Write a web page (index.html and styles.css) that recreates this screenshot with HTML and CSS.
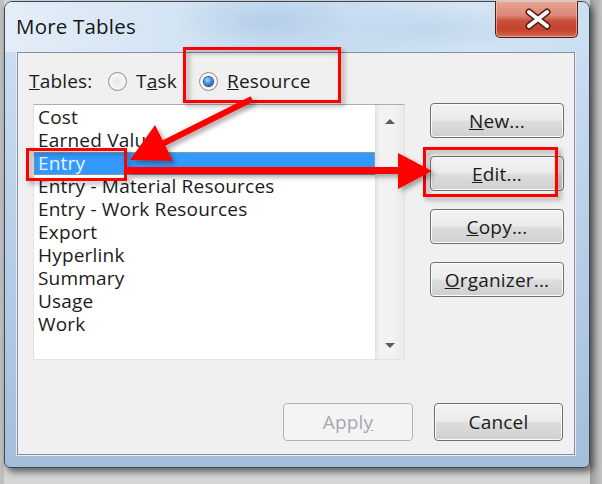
FILE: index.html
```html
<!DOCTYPE html>
<html>
<head>
<meta charset="utf-8">
<title>More Tables</title>
<link rel="stylesheet" href="styles.css">
</head>
<body>
<div class="screen">
  <div class="window">
    <div class="titlebar">
      <span class="title">More Tables</span>
      <div class="close-btn">
        <svg width="83" height="37" viewBox="0 0 83 37">
          <path d="M33 11 L51 25 M51 11 L33 25" stroke="#5a1c14" stroke-width="7" stroke-linecap="round" fill="none"/>
          <path d="M33 11 L51 25 M51 11 L33 25" stroke="#ffffff" stroke-width="4" stroke-linecap="round" fill="none"/>
        </svg>
      </div>
    </div>
    <div class="client">
      <div class="tables-row">
        <span class="label"><u>T</u>ables:</span>
        <span class="radio radio-task"><span class="radio-circle"></span><span class="radio-text">T<u>a</u>sk</span></span>
        <span class="radio"><span class="radio-circle checked"></span><span class="radio-text"><u>R</u>esource</span></span>
      </div>
      <div class="main-row">
        <div class="listbox">
          <ul class="items">
            <li>Cost</li>
            <li>Earned Value</li>
            <li class="selected">Entry</li>
            <li>Entry - Material Resources</li>
            <li>Entry - Work Resources</li>
            <li>Export</li>
            <li>Hyperlink</li>
            <li>Summary</li>
            <li>Usage</li>
            <li>Work</li>
          </ul>
          <div class="scrollbar">
            <span class="arrow-up"></span>
            <span class="arrow-down"></span>
          </div>
        </div>
        <div class="side-buttons">
          <button class="btn side"><u>N</u>ew...</button>
          <button class="btn side"><u>E</u>dit...</button>
          <button class="btn side"><u>C</u>opy...</button>
          <button class="btn side"><u>O</u>rganizer...</button>
        </div>
      </div>
      <div class="footer">
        <button class="btn foot apply" disabled>Appl<u>y</u></button>
        <button class="btn foot cancel">Cancel</button>
      </div>
    </div>
  </div>
  <svg class="annotations" width="602" height="484" viewBox="0 0 602 484">
    <defs>
      <filter id="sh" x="-20%" y="-20%" width="140%" height="140%">
        <feDropShadow dx="3" dy="3" stdDeviation="2.5" flood-color="#000" flood-opacity="0.35"/>
      </filter>
    </defs>
    <g filter="url(#sh)" fill="none" stroke="#ff0000" stroke-width="3">
      <rect x="184.5" y="48.5" width="155" height="53"/>
      <rect x="27.5" y="149.5" width="98" height="30"/>
      <rect x="424.5" y="148.5" width="132" height="47"/>
    </g>
    <g filter="url(#sh)" fill="#ff0000">
      <line x1="252" y1="99" x2="162" y2="144" stroke="#ff0000" stroke-width="6"/>
      <polygon points="130,160 155,125 173,161"/>
      <rect x="127" y="167" width="274" height="7"/>
      <polygon points="398,153 432,171 398,189"/>
    </g>
  </svg>
</div>
</body>
</html>
```
FILE: styles.css
```css
* {
  box-sizing: border-box;
}

html,
body {
  margin: 0;
  padding: 0;
}

body {
  width: 602px;
  height: 484px;
  overflow: hidden;
  background: #d2d2d2;
  font-family: "Open Sans", "Noto Sans", sans-serif;
}

.screen {
  position: relative;
  width: 602px;
  height: 484px;
  padding: 1px 0 0 4px;
  background: linear-gradient(to right, #bfbfbf 0, #bfbfbf 4px, #d6d6d6 4px, #d6d6d6 590px, #9c9c9c 590px, #c4c4c4 602px);
}

.window {
  position: relative;
  width: 586px;
  height: 467px;
  border: 1px solid #3b4756;
  border-radius: 8px 8px 6px 6px;
  background: linear-gradient(to bottom, #dbe8f5 0%, #cadcef 12%, #b6cde6 55%, #a3bedb 100%);
  box-shadow: 3px 4px 7px rgba(0, 0, 0, 0.55);
}

.titlebar {
  position: relative;
  height: 50px;
  display: flex;
  align-items: center;
  padding: 0 0 2px 11px;
  border-radius: 7px 7px 0 0;
  background:
    radial-gradient(ellipse 90px 30px at 260px 20px, rgba(150, 185, 220, 0.45), transparent),
    radial-gradient(ellipse 120px 25px at 430px 28px, rgba(160, 195, 225, 0.35), transparent),
    linear-gradient(to right, #e3edf7 0%, #d3e4f4 30%, #c8dcf0 55%, #d5e5f4 80%, #cadef1 100%);
}

.title {
  font-size: 20.5px;
  color: #161616;
  letter-spacing: 0.2px;
}

.close-btn {
  position: absolute;
  top: -1px;
  left: 490px;
  width: 83px;
  height: 37px;
  border: 1px solid #4e1f18;
  border-top: none;
  border-radius: 0 0 5px 5px;
  background: linear-gradient(to bottom, #e7a596 0%, #dc8877 40%, #c9503b 55%, #c4432d 80%, #d36a52 100%);
  box-shadow: inset 0 0 0 1px rgba(255, 210, 200, 0.55);
}

.close-btn svg {
  display: block;
}

.client {
  margin: 0 14px 0 12px;
  height: 403px;
  background: #f0f0f0;
  border: 1px solid #7d8ea3;
  box-shadow: 0 0 0 1px #e6eef7;
  display: flex;
  flex-direction: column;
  font-size: 19px;
  letter-spacing: 0.2px;
  color: #1b1b1b;
}

.tables-row {
  margin-top: 13px;
  height: 30px;
  padding-left: 11px;
  display: flex;
  align-items: center;
}

.label {
  width: 79px;
}

.radio {
  display: flex;
  align-items: center;
  gap: 9px;
}

.radio-task {
  width: 91px;
}

.radio-circle {
  width: 19px;
  height: 19px;
  border-radius: 50%;
  border: 1px solid #8e8f8f;
  background: radial-gradient(circle at 50% 50%, #e6e6e6 0, #f4f4f4 45%, #d8d8d8 70%, #f6f6f6 100%);
  box-shadow: inset 0 0 0 2px #f8f8f8;
  position: relative;
}

.radio-circle.checked::after {
  content: "";
  position: absolute;
  left: 4px;
  top: 4px;
  width: 9px;
  height: 9px;
  border-radius: 50%;
  background: radial-gradient(circle at 40% 35%, #a9d8ff 0, #3e8fe0 45%, #0d3f8a 100%);
  box-shadow: 0 0 0 1px #1b4f92;
}

.main-row {
  margin-top: 8px;
  display: flex;
  align-items: flex-start;
}

.listbox {
  margin-left: 15px;
  width: 372px;
  height: 256px;
  background: #ffffff;
  border: 1px solid #dde3ea;
  border-top-color: #abadb3;
  display: flex;
}

.items {
  list-style: none;
  margin: 0;
  padding: 1px 0 0 0;
  flex: 1;
}

.items li {
  height: 23px;
  line-height: 23px;
  padding-left: 4px;
  white-space: nowrap;
}

.items li.selected {
  background: #3399ff;
  color: #eaf4ff;
  outline: 1px dotted #d59a5a;
  outline-offset: -1px;
}

.scrollbar {
  width: 29px;
  height: 100%;
  background: linear-gradient(to right, #e4e4e4 0, #f1f1f1 3px, #f3f3f3 60%, #e9e9e9 100%);
  border-left: 1px solid #e2e2e2;
  display: flex;
  flex-direction: column;
  align-items: center;
  justify-content: space-between;
  padding: 14px 0 11px;
}

.arrow-up {
  width: 0;
  height: 0;
  border-left: 5px solid transparent;
  border-right: 5px solid transparent;
  border-bottom: 5px solid #5a5a5a;
}

.arrow-down {
  width: 0;
  height: 0;
  border-left: 5px solid transparent;
  border-right: 5px solid transparent;
  border-top: 5px solid #5a5a5a;
}

.side-buttons {
  margin-left: 25px;
  margin-top: -1px;
  display: flex;
  flex-direction: column;
  gap: 18px;
}

.btn {
  font-family: "Open Sans", "Noto Sans", sans-serif;
  font-size: 19px;
  letter-spacing: 0.2px;
  color: #1b1b1b;
  padding: 0;
  border: 1px solid #707070;
  border-radius: 4px;
  background: linear-gradient(to bottom, #f3f3f3 0%, #ebebeb 48%, #dddddd 52%, #cfcfcf 100%);
  box-shadow: inset 0 0 0 1px #fbfbfb;
}

.btn.side {
  width: 134px;
  height: 35px;
}

.footer {
  margin-top: 43px;
  padding-right: 11px;
  display: flex;
  justify-content: flex-end;
  gap: 21px;
}

.btn.foot {
  height: 38px;
}

.btn.apply {
  width: 130px;
  color: #a3a9b0;
  border-color: #b0b5ba;
  background: #f4f4f4;
  box-shadow: none;
}

.btn.cancel {
  width: 129px;
}

.annotations {
  position: absolute;
  left: 0;
  top: 0;
  pointer-events: none;
}
```
